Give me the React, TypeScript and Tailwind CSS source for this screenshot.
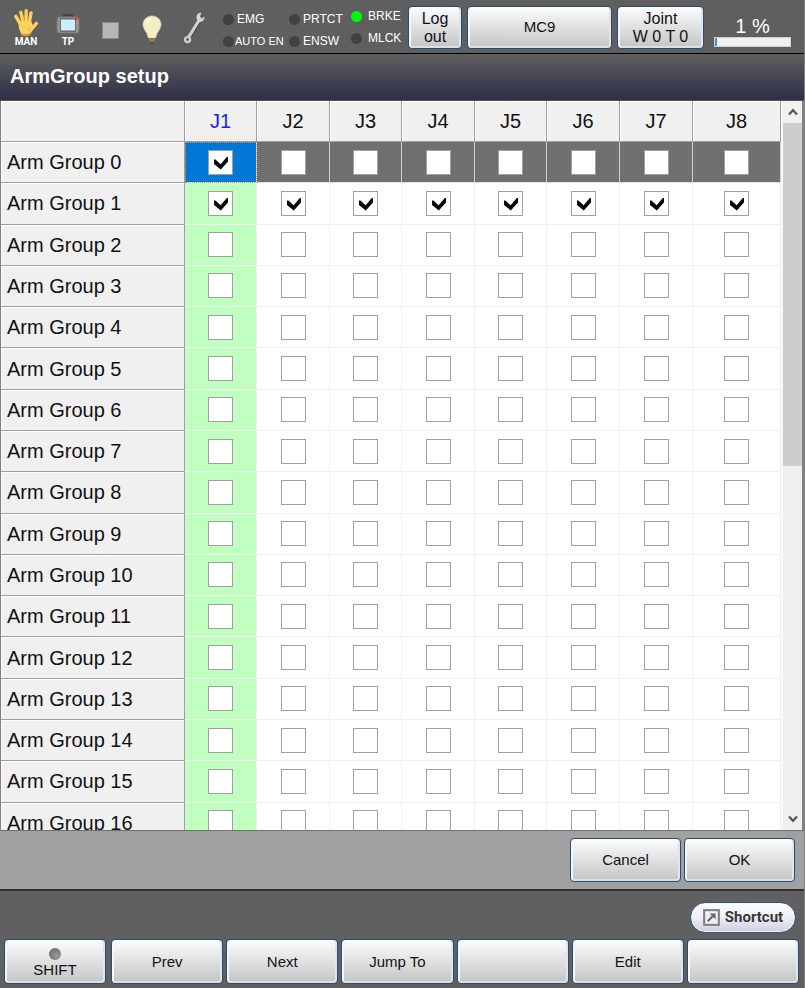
import { useRef, useState } from "react";
import type { ReactNode } from "react";

const JOINTS = ["J1", "J2", "J3", "J4", "J5", "J6", "J7", "J8"];
const ROW_COUNT = 17;

function HandIcon() {
  return (
    <svg viewBox="0 0 26 28" className="h-[28px] w-[26px]" aria-hidden="true">
      <g stroke="#fbd160" strokeWidth="3.4" strokeLinecap="round" fill="none">
        <path d="M8 17 L2.8 8.4" />
        <path d="M10.5 15 L7.8 4.4" />
        <path d="M13 15 L13.2 2.8" />
        <path d="M16 16 L18 5" />
        <path d="M17 23 L23.4 15.4" />
      </g>
      <path d="M5.6 13 L17.8 12 L20.5 19 L17 27 Q12 28.6 8.5 27 L5.8 20 Z" fill="#fbd160" />
      <path d="M8.5 27 Q12 28.6 17 27 L17.6 25 Q12 26.8 7.8 25 Z" fill="#e09a2e" />
      <path d="M8.4 13.5 L7.2 9.6 M11.6 12.4 L10.8 8 M14.8 12.4 L15.4 8 M15.5 23 Q15.6 20.6 18 19.2" stroke="#d99c38" strokeWidth="0.7" fill="none" />
    </svg>
  );
}

function PendantIcon() {
  return (
    <svg viewBox="0 0 24 20" className="h-[20px] w-[24px]" aria-hidden="true">
      <path d="M8 3 V1 H16 V3" fill="none" stroke="#3f3f3f" strokeWidth="1.5" />
      <rect x="1" y="3" width="22" height="16" rx="2.5" fill="#979797" stroke="#777" />
      <rect x="4" y="4" width="16" height="14" fill="#6d6d6d" />
      <rect x="5.5" y="6" width="13" height="10" fill="#c5effa" stroke="#f2fbfd" strokeWidth="0.8" />
      <circle cx="20" cy="5" r="1.7" fill="#e23b3b" />
    </svg>
  );
}

function BulbIcon() {
  return (
    <svg viewBox="0 0 20 30" className="h-[30px] w-[20px]" aria-hidden="true">
      <path d="M10 1 C4.6 1 1 5 1 9.6 C1 14.5 5.2 16.6 6.4 23 H13.6 C14.8 16.6 19 14.5 19 9.6 C19 5 15.4 1 10 1 Z" fill="#f4edc6" stroke="#dcd4a4" strokeWidth="0.7" />
      <path d="M5 8 Q6 4.4 9.4 3.6" stroke="#fffdf0" strokeWidth="1.6" fill="none" />
      <path d="M6.8 23 H13.2 V26 L11.6 28.6 H8.4 L6.8 26 Z" fill="#4a4a45" />
      <path d="M6.8 24 H13.2 M7.2 26 H12.8" stroke="#c9b650" strokeWidth="1.2" />
    </svg>
  );
}

function WrenchIcon() {
  return (
    <svg viewBox="0 0 22 34" className="h-[34px] w-[22px]" aria-hidden="true">
      <path d="M5.4 27 L16.4 9.4" stroke="#4a4a4a" strokeWidth="4.8" fill="none" strokeLinecap="round" />
      <path d="M5.4 26.4 L16.2 9" stroke="#cfcfcf" strokeWidth="3.2" fill="none" />
      <path d="M18.4 1.6 Q14 2 13.4 6 Q13.2 8.8 15 10.2 Q17.4 12 20 9.8 Q21.8 8.4 21.6 5.4 L18.8 7.4 L16.9 5.6 Z" fill="#d6d6d6" />
      <circle cx="4.6" cy="28.6" r="2.5" fill="none" stroke="#cfcfcf" strokeWidth="2.3" />
    </svg>
  );
}

function Lamp({ label, on = false, size = "text-[12px]", gap = "gap-[3px]" }: { label: string; on?: boolean; size?: string; gap?: string }) {
  return (
    <div className={`flex h-[22px] items-center whitespace-nowrap ${gap}`}>
      <span className={`size-[11px] shrink-0 rounded-full ${on ? "bg-[#00fa0c]" : "bg-[#414141]"}`} />
      <span className={size}>{label}</span>
    </div>
  );
}

function PanelButton({ children, className = "", label }: { children?: ReactNode; className?: string; label?: string }) {
  return (
    <button
      type="button"
      aria-label={label}
      className={`flex flex-col items-center justify-center rounded-[4px] border border-[#1f4f82] bg-linear-to-b from-[#fdfdfd] to-[#c4c4c4] text-[#111118] shadow-[inset_2px_0_0_#f6f6f6,inset_-2px_0_0_#e4e4e4,inset_0_-2px_0_#dedede,inset_0_1px_0_#ffffff] ${className}`}
    >
      {children}
    </button>
  );
}

function CheckBox({ checked, onChange, label }: { checked: boolean; onChange: () => void; label: string }) {
  return (
    <span className="grid place-items-center">
      <input
        type="checkbox"
        aria-label={label}
        checked={checked}
        onChange={onChange}
        className="peer col-start-1 row-start-1 size-[25px] appearance-none border border-[#a0a0a0] bg-white"
      />
      <svg viewBox="0 0 14 14" className="pointer-events-none invisible col-start-1 row-start-1 mt-[2px] ml-px size-[14px] peer-checked:visible" aria-hidden="true">
        <path d="M0 3.4 L1.4 3.4 L6.6 8.2 L12.8 1 H14 V5.4 L6.8 13.4 L0 8 Z" fill="#0a0408" />
      </svg>
    </span>
  );
}

function Chevron({ down = false }: { down?: boolean }) {
  return (
    <svg viewBox="0 0 10 8" className="h-[8px] w-[10px]" aria-hidden="true">
      <path d={down ? "M1 1.6 L5 5.8 L9 1.6" : "M1 6.4 L5 2.2 L9 6.4"} fill="none" stroke="#555" strokeWidth="2.2" />
    </svg>
  );
}

function StatusBar() {
  return (
    <header className="flex h-[54px] shrink-0 items-start border-b border-black bg-[#5f5f5f] pr-[13px] pl-[11px] text-white">
      <div className="flex h-[53px] items-center gap-3">
        <div className="flex w-[30px] flex-col items-center pt-[2px] font-['Roboto',sans-serif] text-[10px] leading-[11px] font-bold">
          <HandIcon />
          MAN
        </div>
        <div className="flex w-[30px] flex-col items-center gap-[2px] pt-[8px] font-['Roboto',sans-serif] text-[10px] leading-[11px] font-bold">
          <PendantIcon />
          TP
        </div>
        <div className="flex w-[30px] justify-center pt-[7px]">
          <span className="size-[17px] border border-[#8a8a8a] bg-[#b6b6b6]" />
        </div>
        <div className="flex w-[30px] justify-center pt-[6px]">
          <BulbIcon />
        </div>
        <div className="flex w-[30px] justify-center pt-[3px]">
          <WrenchIcon />
        </div>
      </div>
      <div className="ml-[14px] flex w-[185px] shrink-0">
        <div className="w-[66px] pt-[8px]">
          <Lamp label="EMG" />
          <Lamp label="AUTO EN" size="text-[11px]" gap="gap-px" />
        </div>
        <div className="w-[62px] pt-[8px]">
          <Lamp label="PRTCT" />
          <Lamp label="ENSW" />
        </div>
        <div className="pt-[5px]">
          <Lamp label="BRKE" on gap="gap-[6px]" />
          <Lamp label="MLCK" gap="gap-[6px]" />
        </div>
      </div>
      <div className="flex flex-1 gap-[5px] pt-[6px]">
        <PanelButton className="h-[43px] w-[54px] text-[16px] leading-[18px]">
          <span>Log</span>
          <span>out</span>
        </PanelButton>
        <PanelButton className="h-[43px] flex-1 text-[15px]">MC9</PanelButton>
        <PanelButton className="h-[43px] w-[87px] text-[16px] leading-[18px]">
          <span>Joint</span>
          <span>W 0 T 0</span>
        </PanelButton>
        <div className="ml-[5px] flex w-[77px] flex-col items-center pt-[10px]">
          <span className="text-[20px] leading-[20px]">1 %</span>
          <div className="mt-px flex h-[10px] w-full border border-[#d0d0d0] bg-[#f0f0f0]">
            <div className="w-[2px] bg-[#3d94dc]" />
          </div>
        </div>
      </div>
    </header>
  );
}

function cellClass(row: number, col: number) {
  if (row === 0) {
    return col === 0
      ? "bg-[#0078d7] border-[#f0f0f0] outline-1 -outline-offset-1 outline-dotted outline-[#f08a3c]"
      : "bg-[#707070] border-r-[#d0d0d0] border-b-[#e0e0e0]";
  }
  return col === 0 ? "bg-[#c0ffc0] border-[#f0f0f0]" : "bg-white border-[#f0f0f0]";
}

export default function App() {
  const scroller = useRef<HTMLDivElement>(null);
  const [grid, setGrid] = useState<boolean[][]>(() =>
    Array.from({ length: ROW_COUNT }, (_, r) => JOINTS.map((_, c) => r === 1 || (r === 0 && c === 0))),
  );
  const toggle = (row: number, col: number) =>
    setGrid((g) => g.map((line, r) => (r === row ? line.map((v, c) => (c === col ? !v : v)) : line)));
  const scroll = (dy: number) => scroller.current?.scrollBy({ top: dy });

  return (
    <div className="flex h-screen flex-col border-r border-[#808080] bg-[#606060] font-['Liberation_Sans',Arial,sans-serif]">
      <StatusBar />
      <h1 className="h-[47px] shrink-0 border-b border-[#505050] bg-linear-to-b from-[#5f5f5f] to-[#2f2f47] pl-[10px] text-[20px] leading-[44px] font-bold text-white">
        ArmGroup setup
      </h1>

      <main className="flex min-h-0 flex-1 border-r-2 border-l border-[#808080] bg-[#f8f8f8]">
        <div ref={scroller} className="min-w-0 flex-1 overflow-hidden">
          <table className="h-[743px] w-full table-fixed border-separate border-spacing-0 text-[20px] leading-[24px] text-[#111]">
            <colgroup>
              <col className="w-[184px]" />
              <col className="w-[72px]" />
              <col className="w-[73px]" />
              <col className="w-[72px]" />
              <col className="w-[73px]" />
              <col className="w-[72px]" />
              <col className="w-[73px]" />
              <col className="w-[73px]" />
              <col className="w-[88px]" />
            </colgroup>
            <thead>
              <tr className="h-[41px]">
                <td className="border-r border-b border-[#a0a0a0] bg-[#f0f0f0] p-0 shadow-[inset_1px_1px_0_#ffffff]" />
                {JOINTS.map((joint, i) => (
                  <th
                    key={joint}
                    scope="col"
                    className={`border-r border-b border-[#a0a0a0] bg-[#f0f0f0] p-0 font-normal shadow-[inset_1px_1px_0_#ffffff] ${i === 0 ? "text-[#1a1aff]" : ""}`}
                  >
                    {joint}
                  </th>
                ))}
              </tr>
            </thead>
            <tbody>
              {grid.map((line, r) => (
                <tr key={r}>
                  <th
                    scope="row"
                    className="border-r border-b border-[#a0a0a0] bg-[#f0f0f0] p-0 pl-[6px] text-left font-normal whitespace-nowrap shadow-[inset_1px_1px_0_#ffffff]"
                  >
                    Arm Group {r}
                  </th>
                  {line.map((checked, c) => (
                    <td key={c} className={`border-r border-b p-0 ${cellClass(r, c)}`}>
                      <CheckBox checked={checked} onChange={() => toggle(r, c)} label={`Arm Group ${r} ${JOINTS[c]}`} />
                    </td>
                  ))}
                </tr>
              ))}
            </tbody>
          </table>
        </div>
        <div className="ml-[2px] flex w-[19px] shrink-0 flex-col bg-[#f0f0f0]">
          <button type="button" aria-label="Scroll up" onClick={() => scroll(-41)} className="flex h-[22px] shrink-0 items-center justify-center">
            <Chevron />
          </button>
          <div className="flex-1">
            <div className="h-1/2 bg-[#cdcdcd]" />
          </div>
          <button type="button" aria-label="Scroll down" onClick={() => scroll(41)} className="flex h-[22px] shrink-0 items-center justify-center">
            <Chevron down />
          </button>
        </div>
      </main>

      <div className="flex h-[61px] shrink-0 justify-end gap-[3px] border-t border-b-2 border-t-[#707070] border-b-[#303030] bg-[#a0a0a0] pt-[7px] pr-[9px]">
        <PanelButton className="h-[44px] w-[111px] text-[15px]">Cancel</PanelButton>
        <PanelButton className="h-[44px] w-[111px] text-[15px]">OK</PanelButton>
      </div>

      <footer className="flex h-[97px] shrink-0 flex-col pr-[5px] pl-1">
        <div className="flex justify-end pt-[11px] pr-[3px]">
          <button
            type="button"
            className="flex h-[31px] w-[106px] items-center justify-center gap-[5px] rounded-full border border-[#2c5c8c] bg-linear-to-b from-white via-[#eeeef6] to-[#d0cee0] font-['Roboto',sans-serif] text-[15px] font-bold text-[#383838] shadow-[inset_0_0_0_1px_#f4f4fa]"
          >
            <svg viewBox="0 0 18 18" className="size-[17px]" aria-hidden="true">
              <rect x="1.2" y="1.2" width="15.6" height="15.6" fill="#f0f0f4" stroke="#808080" strokeWidth="2.2" />
              <path d="M5 13 L10.5 7.5" stroke="#666" strokeWidth="2.2" />
              <path d="M7 4.8 H13.4 V11.2 Z" fill="#666" />
            </svg>
            Shortcut
          </button>
        </div>
        <div className="flex gap-[3px] pt-[6px] text-[15px] leading-[18px]">
          <PanelButton className="mr-[2px] h-[45px] w-[102px] pt-[3px]">
            <span className="size-[12px] rounded-full bg-radial-[at_65%_65%] from-[#9a9a9a] to-[#606060]" />
            <span className="pt-px">SHIFT</span>
          </PanelButton>
          <PanelButton className="h-[45px] flex-1">Prev</PanelButton>
          <PanelButton className="h-[45px] flex-1">Next</PanelButton>
          <PanelButton className="h-[45px] flex-1">Jump To</PanelButton>
          <PanelButton className="h-[45px] flex-1" label="Function 4" />
          <PanelButton className="h-[45px] flex-1">Edit</PanelButton>
          <PanelButton className="h-[45px] flex-1" label="Function 6" />
        </div>
      </footer>
    </div>
  );
}
